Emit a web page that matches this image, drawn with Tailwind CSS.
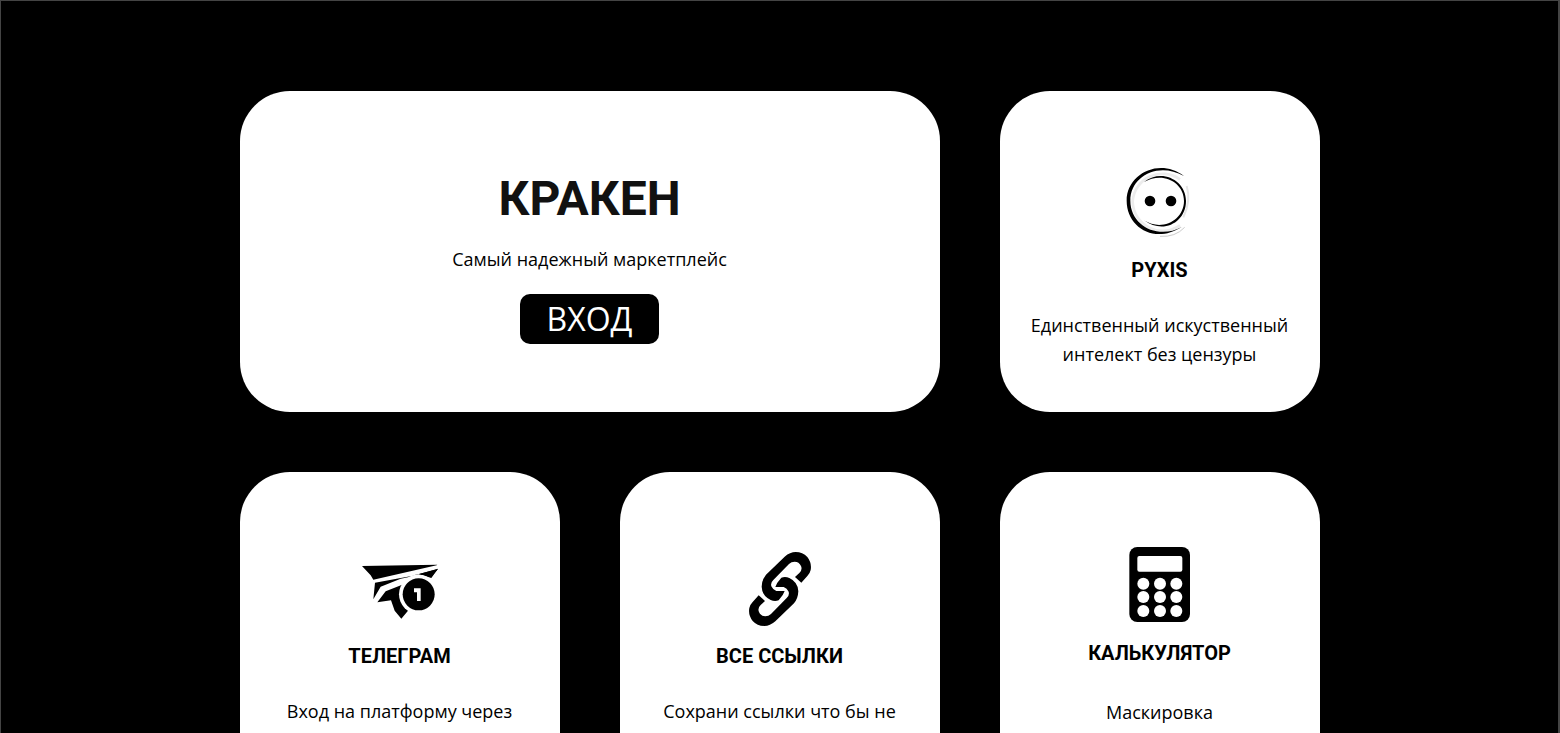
<!DOCTYPE html>
<html lang="ru">

<head>
    <meta charset="UTF-8">
    <meta name="viewport" content="width=device-width, initial-scale=1.0">
    <title>КРАКЕН</title>
    <script src="https://cdn.jsdelivr.net/npm/@tailwindcss/browser@4"></script>
</head>

<body class="bg-black text-black font-['Open_Sans',sans-serif]">
    <div class="h-screen overflow-hidden border-t border-l border-r-2 border-[#444]">
        <main class="mx-auto max-w-[1080px] pt-[90px] grid grid-cols-3 gap-[60px]">
            <!-- Main card -->
            <section class="col-span-2 min-h-[321px] bg-white rounded-[50px] pt-20 flex flex-col items-center text-center">
                <h1 class="font-['Roboto',sans-serif] font-bold text-5xl leading-[56px] text-[#111]">КРАКЕН</h1>
                <p class="mt-[18px] text-lg leading-[29px]">Самый надежный маркетплейс</p>
                <a href="#" class="mt-5 px-[27px] rounded-[10px] bg-black text-white text-[32px] leading-[50px]">ВХОД</a>
            </section>

            <!-- Pyxis -->
            <section class="min-h-[321px] bg-white rounded-[50px] pt-[75px] px-5 flex flex-col items-center text-center">
                <svg class="w-20 h-[74px]" viewBox="0 0 240 222" fill="none" aria-hidden="true">
                    <path d="M180 40A90 90 0 0 0 38 106A90 90 0 0 0 180 178" stroke="#ececec" stroke-width="8" />
                    <path d="M200 60Q214 104 190 154" stroke="#e6e6e6" stroke-width="6" />
                    <path d="M194 184Q166 214 120 211" stroke="#ccc" stroke-width="3" />
                    <path d="M192 30C120-26 20 22 20 104C20 184 104 236 186 182C116 222 31 180 31 104C31 32 113-14 192 30Z" fill="#000" />
                    <path d="M72 48C126 6 198 44 198 105C198 169 130 206 72 163C126 198 192 162 192 105C192 48 128 15 72 48Z" fill="#000" />
                    <circle cx="90" cy="105" r="16" fill="#000" />
                    <circle cx="153" cy="105" r="16" fill="#000" />
                </svg>
                <h2 class="mt-[18px] font-['Roboto',sans-serif] font-bold text-xl leading-6">PYXIS</h2>
                <p class="mt-[29px] text-lg leading-[29px]">Единственный искуственный интелект без цензуры</p>
            </section>

            <!-- Telegram -->
            <section class="min-h-[321px] bg-white rounded-[50px] pt-[75px] px-5 flex flex-col items-center text-center">
                <svg class="w-20 h-[79px]" viewBox="6 -33 240 237" aria-hidden="true">
                    <path d="M12 24L238 20L236 22L46 65L38 52Z" />
                    <path d="M51 74L165 53L240 32L220 60L180 48L150 58L128 62L68 86L46 124Z" />
                    <path d="M58 133L83 100L146 75L170 66L150 158L130 182L110 158L99 127Z" />
                    <circle cx="182" cy="109" r="59" fill="#fff" />
                    <path d="M180 49L240 33L219 58Q200 46 180 49Z" />
                    <circle cx="182" cy="109" r="48" />
                    <path d="M168 91H188V129H177V103H168Z" fill="#fff" />
                </svg>
                <h2 class="mt-[18px] font-['Roboto',sans-serif] font-bold text-xl leading-6">ТЕЛЕГРАМ</h2>
                <p class="mt-[29px] text-lg leading-[29px]">Вход на платформу через</p>
            </section>

            <!-- Links -->
            <section class="min-h-[321px] bg-white rounded-[50px] pt-[75px] px-5 flex flex-col items-center text-center">
                <svg class="w-20 h-[79px]" viewBox="-12 -3 240 237" aria-hidden="true">
                    <path d="M172 104L153 87L166 75Q176 66 171 54Q165 41 152 41Q142 41 135 48L88 96Q79 104 82 115Q87 126 97 129L122 129Q118 142 104 157Q92 161 80 156Q54 144 53 116Q54 94 66 80L122 26Q138 12 155 12Q176 12 190 27Q204 45 200 66Q198 76 190 84Z" />
                    <path transform="rotate(180 108 123)" d="M172 104L153 87L166 75Q176 66 171 54Q165 41 152 41Q142 41 135 48L88 96Q79 104 82 115Q87 126 97 129L122 129Q118 142 104 157Q92 161 80 156Q54 144 53 116Q54 94 66 80L122 26Q138 12 155 12Q176 12 190 27Q204 45 200 66Q198 76 190 84Z" />
                </svg>
                <h2 class="mt-[18px] font-['Roboto',sans-serif] font-bold text-xl leading-6">ВСЕ ССЫЛКИ</h2>
                <p class="mt-[29px] text-lg leading-[29px]">Сохрани ссылки что бы не</p>
            </section>

            <!-- Calculator -->
            <section class="min-h-[321px] bg-white rounded-[50px] pt-[75px] px-5 flex flex-col items-center text-center">
                <svg class="w-20 h-[76px]" viewBox="29 36 240 228" aria-hidden="true">
                    <rect x="57" y="36" width="182" height="225" rx="24" />
                    <g fill="#fff">
                        <rect x="81" y="63" width="135" height="47" rx="6" />
                        <circle cx="99" cy="146" r="18" />
                        <circle cx="149" cy="146" r="18" />
                        <circle cx="198" cy="146" r="18" />
                        <circle cx="99" cy="186" r="18" />
                        <circle cx="149" cy="186" r="18" />
                        <circle cx="198" cy="186" r="18" />
                        <circle cx="99" cy="228" r="18" />
                        <circle cx="149" cy="228" r="18" />
                        <circle cx="198" cy="228" r="18" />
                    </g>
                </svg>
                <h2 class="mt-[18px] font-['Roboto',sans-serif] font-bold text-xl leading-6">КАЛЬКУЛЯТОР</h2>
                <p class="mt-[33px] text-lg leading-[29px]">Маскировка</p>
            </section>
        </main>
    </div>
</body>

</html>
